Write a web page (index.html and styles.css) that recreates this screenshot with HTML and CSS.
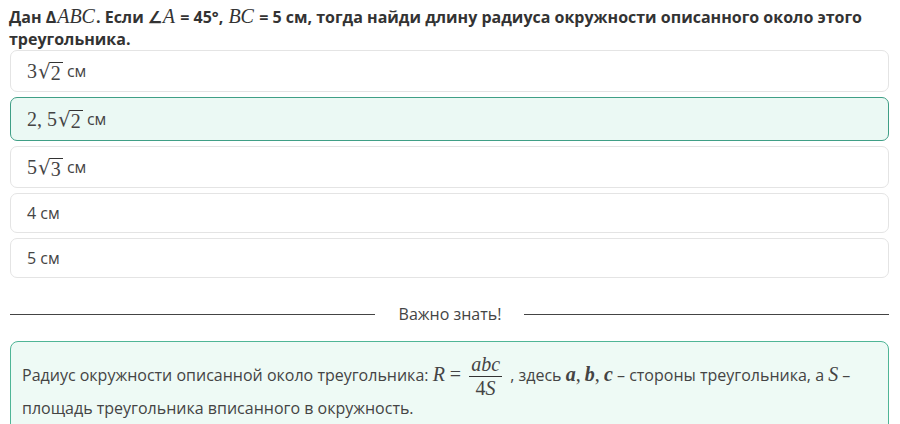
FILE: index.html
```html
<!DOCTYPE html>
<html lang="ru">
<head>
<meta charset="utf-8">
<link rel="stylesheet" href="styles.css">
</head>
<body>
<div class="page">
  <div class="question">Дан Δ<span class="m">ABC</span>. Если ∠<span class="m">A</span> = 45°, <span class="m">BC</span> = 5 см, тогда найди длину радиуса окружности описанного около этого треугольника.</div>
  <div class="options">
    <div class="opt"><span class="num">3</span><span class="sqrt"><span class="rad">√</span><span class="radicand">2</span></span> см</div>
    <div class="opt sel"><span class="num">2, 5</span><span class="sqrt"><span class="rad">√</span><span class="radicand">2</span></span> см</div>
    <div class="opt"><span class="num">5</span><span class="sqrt"><span class="rad">√</span><span class="radicand">3</span></span> см</div>
    <div class="opt short">4 см</div>
    <div class="opt short">5 см</div>
  </div>
  <div class="divider"><span class="line"></span><span class="dtext">Важно знать!</span><span class="line"></span></div>
  <div class="info">
    Радиус окружности описанной около треугольника: <span class="m">R</span><span class="num eq">=</span><span class="frac"><span class="numer m">abc</span><span class="denom"><span class="num">4</span><span class="m">S</span></span></span> , здесь <span class="mb">a</span><span class="num">,</span> <span class="mb">b</span><span class="num">,</span> <span class="mb">c</span> – стороны треугольника, а <span class="m">S</span> – площадь треугольника вписанного в окружность.
  </div>
</div>
</body>
</html>
```
FILE: styles.css
```css
html, body {
  margin: 0;
  padding: 0;
  background: #ffffff;
}
body {
  font-family: "Open Sans", "Noto Sans", sans-serif;
  color: #333333;
  overflow: hidden;
}
.page {
  padding: 6px 11px 0 10px;
}
.question {
  font-size: 16px;
  font-weight: 700;
  line-height: 22px;
  color: #333333;
  margin-left: -1px;
  margin-bottom: 0;
}
.question .m {
  padding: 0 1px;
}
.m {
  font-family: "Liberation Serif", "DejaVu Serif", serif;
  font-style: italic;
  font-weight: 400;
  font-size: 20px;
  line-height: 1;
}
.mb {
  font-family: "Liberation Serif", "DejaVu Serif", serif;
  font-style: italic;
  font-weight: 700;
  font-size: 20px;
  line-height: 1;
}
.num {
  font-family: "Liberation Serif", "DejaVu Serif", serif;
  font-size: 20px;
  font-weight: 400;
  line-height: 1;
}
.eq {
  margin: 0 5px;
}
.options {
  display: flex;
  flex-direction: column;
  gap: 5px;
}
.opt {
  height: 42px;
  box-sizing: border-box;
  border: 1px solid #e4e4e4;
  border-radius: 7px;
  display: flex;
  align-items: center;
  padding-left: 16px;
  font-size: 16px;
  color: #444444;
  white-space: pre;
}
.opt.sel {
  height: 44px;
  border-color: #3f9f86;
  background: #ebf9f4;
}
.opt.short {
  height: 40px;
}
.sqrt {
  display: inline-flex;
  align-items: flex-start;
  margin-left: 1px;
}
.rad {
  font-family: "DejaVu Serif", serif;
  font-size: 20px;
  line-height: 22px;
  margin-right: -1px;
}
.radicand {
  font-family: "Liberation Serif", serif;
  font-size: 20px;
  line-height: 20px;
  border-top: 1px solid #333;
  margin-top: 2px;
  padding: 0 2px 0 1px;
}
.divider {
  display: flex;
  align-items: center;
  margin-top: 24px;
  height: 24px;
}
.line {
  flex: 1;
  height: 1px;
  background: #444444;
}
.dtext {
  font-size: 16px;
  color: #444444;
  padding: 0 23px 0 24px;
}
.info {
  margin-top: 15px;
  border: 1px solid #4fb596;
  border-radius: 8px;
  background: #eefaf5;
  padding: 17px 12px 20px 11px;
  font-size: 16px;
  line-height: 33px;
  color: #444444;
}
.frac {
  display: inline-flex;
  flex-direction: column;
  align-items: center;
  vertical-align: middle;
  line-height: 22px;
  margin: -10px 4px -10px 3px;
}
.numer {
  border-bottom: 1px solid #333;
  padding: 0 2px 1px;
  line-height: 22px;
}
.denom {
  padding-top: 1px;
  line-height: 22px;
}
```
